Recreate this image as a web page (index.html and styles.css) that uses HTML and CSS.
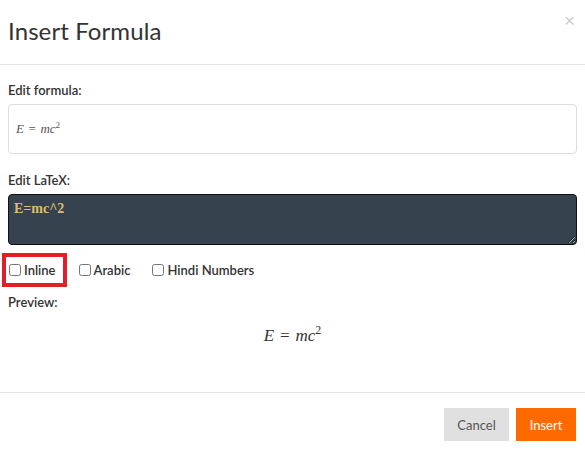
FILE: index.html
```html
<!DOCTYPE html>
<html>
<head>
<meta charset="utf-8">
<link rel="stylesheet" href="styles.css">
</head>
<body>
<div class="modal">
  <div class="modal-header">
    <h4 class="modal-title">Insert Formula</h4>
    <button class="close" type="button">×</button>
  </div>
  <div class="modal-body">
    <div class="field-label">Edit formula:</div>
    <div class="formula-box"><span class="math">E <span class="op">=</span> mc<sup>2</sup></span></div>
    <div class="field-label latex-label">Edit LaTeX:</div>
    <textarea class="latex" spellcheck="false">E=mc^2</textarea>
    <div class="options">
      <label class="opt highlight"><input type="checkbox">Inline</label>
      <label class="opt"><input type="checkbox">Arabic</label>
      <label class="opt"><input type="checkbox">Hindi Numbers</label>
    </div>
    <div class="field-label preview-label">Preview:</div>
    <div class="preview"><span class="math">E <span class="op">=</span> mc<sup>2</sup></span></div>
  </div>
  <div class="modal-footer">
    <button class="btn btn-cancel" type="button">Cancel</button>
    <button class="btn btn-insert" type="button">Insert</button>
  </div>
</div>
</body>
</html>
```

FILE: styles.css
```css
html, body {
  margin: 0;
  padding: 0;
  background: #fff;
}
body {
  font-family: Lato, "Open Sans", sans-serif;
  color: #333;
  font-size: 13px;
}
.modal {
  height: 453px;
  display: flex;
  flex-direction: column;
}
.modal-header {
  height: 65px;
  box-sizing: border-box;
  padding: 16px 8px 0 8px;
  border-bottom: 1px solid #e5e5e5;
  display: flex;
  justify-content: space-between;
  align-items: flex-start;
}
.modal-title {
  margin: 0;
  font-size: 24px;
  font-weight: 400;
  letter-spacing: 0.1px;
  line-height: 30px;
  color: #333;
}
.close {
  border: 0;
  background: none;
  padding: 0;
  margin: -5px 2px 0 0;
  font-family: "Liberation Sans", Arial, sans-serif;
  font-size: 19px;
  line-height: 20px;
  color: #000;
  opacity: 0.2;
  cursor: pointer;
}
.modal-body {
  flex: 1;
  padding: 16px 8px 0 8px;
  display: flex;
  flex-direction: column;
}
.field-label {
  line-height: 18px;
  font-weight: 600;
  margin-bottom: 5px;
}
.latex-label {
  margin-top: 17px;
}
.formula-box {
  height: 50px;
  box-sizing: border-box;
  border: 1px solid #ddd;
  border-radius: 4px;
  padding: 0 7px;
  display: flex;
  align-items: center;
}
.formula-box .math {
  font-size: 13px;
  color: #555;
}
.math {
  font-family: "Liberation Serif", "DejaVu Serif", serif;
  font-style: italic;
}
.math .op {
  font-style: normal;
  margin: 0 0.1em;
}
.math sup {
  font-style: normal;
  font-size: 0.7em;
  line-height: 0;
  vertical-align: 0.55em;
}
.latex {
  display: block;
  box-sizing: border-box;
  width: 100%;
  height: 51px;
  margin: 0;
  padding: 6px 5px;
  background: #36424d;
  border: 1px solid #111;
  border-radius: 4px;
  color: #dcbb74;
  font-family: "Liberation Serif", "Times New Roman", serif;
  font-weight: 700;
  font-size: 14px;
  line-height: 16px;
  resize: vertical;
  outline: none;
}
.options {
  display: flex;
  align-items: center;
  margin-top: 12px;
  height: 26px;
}
.opt {
  display: inline-flex;
  align-items: center;
  font-weight: 600;
  line-height: 18px;
  margin-right: 22px;
  white-space: nowrap;
}
.opt input {
  width: 12px;
  height: 12px;
  margin: 0 3px 0 0;
}
.highlight {
  margin-left: -2px;
  padding: 4px 7px 4px 3px;
  outline: 4px solid #e21f26;
  margin-right: 16px;
}
.preview-label {
  margin-top: 10px;
}
.preview {
  margin-top: 10px;
  text-align: center;
  line-height: 20px;
}
.preview .math {
  font-size: 17px;
  color: #333;
}
.modal-footer {
  border-top: 1px solid #e5e5e5;
  padding: 15px 9px 12px 8px;
  display: flex;
  justify-content: flex-end;
  gap: 7px;
}
.btn {
  height: 33px;
  border: 0;
  border-radius: 0;
  font-family: Lato, "Open Sans", sans-serif;
  font-size: 13px;
  padding: 0 12px;
  cursor: pointer;
}
.btn-cancel {
  width: 65px;
  background: #e0e0e0;
  color: #555;
}
.btn-insert {
  width: 60px;
  background: #ff6a00;
  color: #fff;
}
```
